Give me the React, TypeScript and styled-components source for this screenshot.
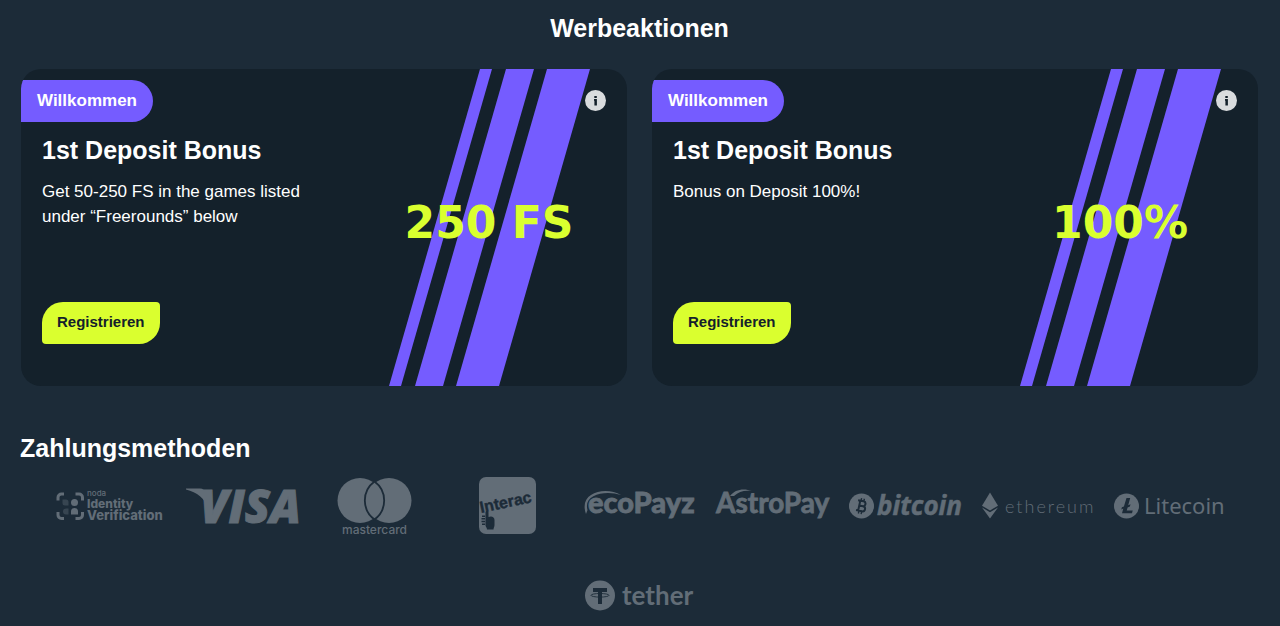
import React from "react";
import styled, { createGlobalStyle } from "styled-components";

const GlobalStyle = createGlobalStyle`
  *, *::before, *::after { box-sizing: border-box; }
  body {
    margin: 0;
    background: #1c2b38;
    color: #fff;
    font-family: "Liberation Sans", Arial, sans-serif;
  }
`;

const Page = styled.main`
  padding: 8px 21px 0 20px;
`;

const SectionTitle = styled.h2<{ $align: "center" | "left" }>`
  margin: 0;
  font-size: 25px;
  line-height: 40px;
  font-weight: 700;
  text-align: ${(p) => p.$align};
`;

const CardGrid = styled.div`
  display: grid;
  grid-template-columns: 1fr 1fr;
  gap: 25px;
  margin: 21px 1px 42px;
`;

const Card = styled.article`
  position: relative;
  display: flex;
  flex-direction: column;
  align-items: flex-start;
  min-height: 317px;
  padding: 11px 0 42px;
  border-radius: 20px;
  background: #14212b;
  overflow: hidden;
`;

const CardArt = styled.svg`
  position: absolute;
  top: 0;
  right: 0;
  width: 240px;
  height: 100%;
`;

const Tag = styled.span`
  position: relative;
  padding: 0 16px;
  border-radius: 0 21px 21px 0;
  background: #755cff;
  font-size: 17px;
  line-height: 42px;
  font-weight: 700;
`;

const InfoButton = styled.button`
  position: absolute;
  top: 21px;
  right: 21px;
  width: 21px;
  height: 21px;
  padding: 0;
  border: 0;
  border-radius: 50%;
  background: none;
  cursor: pointer;

  svg { display: block; width: 100%; height: 100%; }
`;

const CardTitle = styled.h3`
  margin: 9px 21px 0;
  font-size: 25px;
  line-height: 38px;
  font-weight: 700;
`;

const CardText = styled.p`
  width: 280px;
  margin: 10px 21px 0;
  font-size: 17px;
  line-height: 25px;
`;

const RegisterButton = styled.button`
  margin: auto 21px 0;
  height: 42px;
  padding: 0 15px 3px;
  border: 0;
  border-radius: 21px 4px 21px 4px;
  background: #daff2f;
  color: #14212b;
  font-family: inherit;
  font-size: 15px;
  font-weight: 700;
  cursor: pointer;
`;

const PaymentList = styled.ul`
  display: flex;
  flex-wrap: wrap;
  justify-content: center;
  row-gap: 30px;
  margin: 0;
  padding: 9px 23px 0;
  list-style: none;
`;

const PaymentItem = styled.li`
  display: flex;
  justify-content: center;
  width: 11.11%;
  height: 60px;
`;

const Logo = styled.svg`
  flex: none;
  width: 112px;
  height: 60px;
  overflow: visible;
  fill: #626d77;
`;

const GREY = "#626d77";
const DARK = "#1c2b38";

function Stripes({ label }: { label: string }) {
  return (
    <CardArt viewBox="0 0 240 317" aria-label={label} role="img">
      <g fill="#755cff">
        <polygon points="93,0 105,0 14,317 2,317" />
        <polygon points="119,0 147,0 56,317 28,317" />
        <polygon points="160,0 203,0 112,317 69,317" />
      </g>
      <text
        x="102"
        y="169"
        textAnchor="middle"
        fill="#daff2f"
        fontFamily="DejaVu Sans, sans-serif"
        fontWeight="700"
        fontSize="44"
      >
        {label}
      </text>
    </CardArt>
  );
}

function PromoCard({ title, text, label }: { title: string; text: string; label: string }) {
  return (
    <Card>
      <Stripes label={label} />
      <Tag>Willkommen</Tag>
      <InfoButton type="button" aria-label="Info">
        <svg viewBox="0 0 21 21">
          <circle cx="10.500" cy="10.500" r="10.500" fill="#d9dcde" />
          <path d="M9.300 6h2.500v2H9.300zM9 9h2.900v6.600H9.400v-4.900H9z" fill="#14212b" />
        </svg>
      </InfoButton>
      <CardTitle>{title}</CardTitle>
      <CardText>{text}</CardText>
      <RegisterButton type="button">Registrieren</RegisterButton>
    </Card>
  );
}

function NodaLogo() {
  return (
    <Logo viewBox="0 0 112 60" role="img" aria-label="noda Identity Verification">
      <g fill="none" stroke={GREY} strokeWidth="3">
        <path d="M5 23.500V20.500a3.500 3.500 0 0 1 3.500-3.500H11" />
        <path d="M22.500 17H26a3.500 3.500 0 0 1 3.500 3.500V23.500" />
        <path d="M29.500 35v3a3.500 3.500 0 0 1-3.500 3.500H22.500" />
        <path d="M11 41.500H8.500a3.500 3.500 0 0 1-3.500-3.500V35" />
      </g>
      <circle cx="21.500" cy="25.500" r="3.500" />
      <path d="M18 37.500v-3a3.500 3.500 0 0 1 7 0v3z" />
      <path d="M9.500 22.500h3.500a2.500 2.500 0 0 1 2.500 2.500V28.500H12a2.500 2.500 0 0 1-2.500-2.500zM15.500 37.500v-6H13a3 3 0 0 0-3 3 3 3 0 0 0 3 3z" opacity="0.4" />
      <g fontFamily="Inter, sans-serif" fontWeight="800">
        <text x="34" y="19" fontSize="8" fontWeight="500">noda</text>
        <text x="34" y="31" fontSize="12">Identity</text>
        <text x="34" y="43" fontSize="13">Verification</text>
      </g>
    </Logo>
  );
}

function VisaLogo() {
  return (
    <Logo viewBox="0 0 112 60" role="img" aria-label="VISA">
      <path d="M0 11.500h14c3 0 5 1.500 5.500 4.500l2.500 15C19 22 11 15 0 12.500z" />
      <text
        x="14"
        y="46"
        fontFamily="Open Sans, sans-serif"
        fontWeight="800"
        fontStyle="italic"
        fontSize="46"
        stroke={GREY}
        strokeWidth="1"
      >
        VISA
      </text>
    </Logo>
  );
}

function MastercardLogo() {
  return (
    <Logo viewBox="0 0 112 60" role="img" aria-label="mastercard">
      <circle cx="42" cy="23.500" r="22.500" />
      <circle cx="71" cy="23.500" r="22.500" />
      <path
        d="M56.500 4.500a23.500 23.500 0 0 1 0 38a23.500 23.500 0 0 1 0-38z"
        stroke={DARK}
        strokeWidth="1.800"
      />
      <text x="56.500" y="57" textAnchor="middle" fontFamily="Inter, sans-serif" fontWeight="500" fontSize="12">
        mastercard
      </text>
    </Logo>
  );
}

function InteracLogo() {
  return (
    <Logo viewBox="0 0 112 60" role="img" aria-label="Interac">
      <rect x="28" y="0" width="57" height="57" rx="7" />
      <g fill={DARK}>
        <text
          x="30"
          y="36"
          transform="rotate(-12 30 36)"
          fontFamily="Liberation Sans, sans-serif"
          fontWeight="700"
          fontSize="16"
          stroke={DARK}
          strokeWidth="0.400"
        >
          Interac
        </text>
        <path d="M34.500 35.500c0-2 3-2 3 0V40c3-1.500 6 0 6 3v5c0 2-1 2.500-1 4.500h-6.500c0-2-1.500-3-1.500-4z" />
        <path d="M31 38.500h3V40h-3zM30.500 41H34v1.500h-3.500zM30.500 43.700H34v1.500h-3.500zM31 46.500h3V48h-3z" />
      </g>
    </Logo>
  );
}

function EcoPayzLogo() {
  return (
    <Logo viewBox="0 0 112 60" role="img" aria-label="ecoPayz">
      <path d="M2 37C-6 15 22 9 37 18C22 13-1 17 3.500 33z" />
      <text
        x="4"
        y="36"
        fontFamily="Lato, sans-serif"
        fontWeight="900"
        fontSize="29"
        stroke={GREY}
        strokeWidth="0.800"
      >
        ecoPayz
      </text>
    </Logo>
  );
}

function AstroPayLogo() {
  return (
    <Logo viewBox="0 0 112 60" role="img" aria-label="AstroPay">
      <path d="M14 19c5-7 14-8 22-5-7-1-13 0-18 5z" />
      <text x="0" y="36" fontFamily="Lato, sans-serif" fontWeight="700" fontSize="28" stroke={GREY} strokeWidth="0.800">
        AstroPay
      </text>
    </Logo>
  );
}

function BitcoinLogo() {
  return (
    <Logo viewBox="0 0 112 60" role="img" aria-label="bitcoin">
      <circle cx="12.500" cy="29" r="12.500" />
      <g fill="none" stroke={DARK} transform="translate(-0.500 -0.500) rotate(12 13 29.500)">
        <path d="M8.500 24.500H14a2.400 2.400 0 0 1 0 4.900h-3.500H14.500a2.600 2.600 0 0 1 0 5.200H8.500M10.700 24.500v10" strokeWidth="2" />
        <path d="M11.500 21.800v3M14.300 21.800v3M11.500 34.500v3M14.300 34.500v3" strokeWidth="1.400" />
      </g>
      <text
        x="28"
        y="38"
        fontFamily="Open Sans, sans-serif"
        fontWeight="700"
        fontStyle="italic"
        fontSize="26"
        stroke={GREY}
        strokeWidth="0.500"
      >
        bitcoin
      </text>
    </Logo>
  );
}

function EthereumLogo() {
  return (
    <Logo viewBox="0 0 112 60" role="img" aria-label="ethereum">
      <path d="M9 15.500l8 13.200-8 4.700-8-4.700z" />
      <path d="M1 30.500l8 4.700 8-4.700L9 41.500z" />
      <text x="24" y="36" fontFamily="Lato, sans-serif" fontWeight="300" fontSize="18" letterSpacing="2">
        ethereum
      </text>
    </Logo>
  );
}

function LitecoinLogo() {
  return (
    <Logo viewBox="0 0 112 60" role="img" aria-label="Litecoin">
      <circle cx="12.500" cy="29" r="12.500" />
      <path d="M12.500 21h3.700l-2 7.200 2.300-.9-.6 2.200-2.300.9-.9 3.200h6l-.7 2.700H8l1.300-4.700-2 .8.600-2.200 2-.8z" fill={DARK} />
      <text x="30" y="37" fontFamily="Noto Sans, sans-serif" fontSize="22">
        Litecoin
      </text>
    </Logo>
  );
}

function TetherLogo() {
  return (
    <Logo viewBox="0 0 112 60" role="img" aria-label="tether">
      <circle cx="16" cy="28.500" r="15" />
      <path d="M9 21h14v4h-5v12h-4V25H9z" fill={DARK} />
      <ellipse cx="16" cy="28.300" rx="9" ry="1.800" fill="none" stroke={DARK} strokeWidth="0.900" />
      <text x="38" y="38" fontFamily="Lato, sans-serif" fontWeight="700" fontSize="26">
        tether
      </text>
    </Logo>
  );
}

const promos = [
  {
    title: "1st Deposit Bonus",
    text: "Get 50-250 FS in the games listed under “Freerounds” below",
    label: "250 FS",
  },
  { title: "1st Deposit Bonus", text: "Bonus on Deposit 100%!", label: "100%" },
];

const payments = [
  NodaLogo,
  VisaLogo,
  MastercardLogo,
  InteracLogo,
  EcoPayzLogo,
  AstroPayLogo,
  BitcoinLogo,
  EthereumLogo,
  LitecoinLogo,
  TetherLogo,
];

export default function App() {
  return (
    <>
      <GlobalStyle />
      <Page>
        <SectionTitle $align="center">Werbeaktionen</SectionTitle>
        <CardGrid>
          {promos.map((promo) => (
            <PromoCard key={promo.label} {...promo} />
          ))}
        </CardGrid>
        <SectionTitle $align="left">Zahlungsmethoden</SectionTitle>
        <PaymentList>
          {payments.map((Payment) => (
            <PaymentItem key={Payment.name}>
              <Payment />
            </PaymentItem>
          ))}
        </PaymentList>
      </Page>
    </>
  );
}
